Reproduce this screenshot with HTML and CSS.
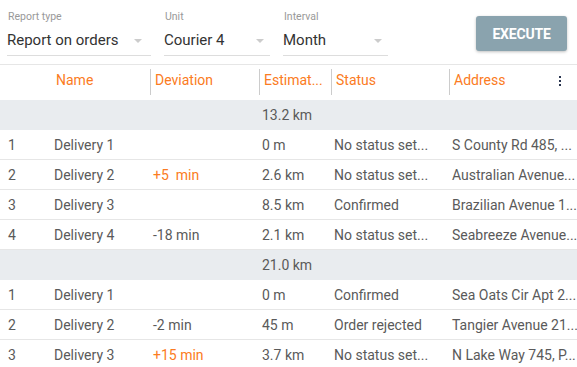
FILE: index.html
```html
<!DOCTYPE html>
<html>
<head>
<meta charset="utf-8">
<title>Report on orders</title>
<link rel="stylesheet" href="styles.css">
</head>
<body>
<div class="toolbar">
	<div class="field f-type">
		<label>Report type</label>
		<div class="select">Report on orders<span class="caret"></span></div>
	</div>
	<div class="field f-unit">
		<label>Unit</label>
		<div class="select">Courier 4<span class="caret"></span></div>
	</div>
	<div class="field f-interval">
		<label>Interval</label>
		<div class="select">Month<span class="caret"></span></div>
	</div>
	<button class="execute">EXECUTE</button>
</div>

<div class="grid">
	<div class="row head">
		<div class="cell"></div>
		<div class="cell">Name</div>
		<div class="cell sep">Deviation</div>
		<div class="cell sep" title="Estimated distance">Estimat...</div>
		<div class="cell sep">Status</div>
		<div class="cell sep">Address<span class="kebab"><i></i><i></i><i></i></span></div>
	</div>

	<div class="row group"><div class="cell span">13.2 km</div></div>
	<div class="row">
		<div class="cell">1</div><div class="cell">Delivery 1</div><div class="cell"></div>
		<div class="cell">0 m</div><div class="cell">No status set...</div><div class="cell">S County Rd 485, ...</div>
	</div>
	<div class="row">
		<div class="cell">2</div><div class="cell">Delivery 2</div><div class="cell late">+5&nbsp;&nbsp;min</div>
		<div class="cell">2.6 km</div><div class="cell">No status set...</div><div class="cell">Australian Avenue...</div>
	</div>
	<div class="row">
		<div class="cell">3</div><div class="cell">Delivery 3</div><div class="cell"></div>
		<div class="cell">8.5 km</div><div class="cell">Confirmed</div><div class="cell">Brazilian Avenue 1...</div>
	</div>
	<div class="row">
		<div class="cell">4</div><div class="cell">Delivery 4</div><div class="cell">-18 min</div>
		<div class="cell">2.1 km</div><div class="cell">No status set...</div><div class="cell">Seabreeze Avenue...</div>
	</div>

	<div class="row group"><div class="cell span">21.0 km</div></div>
	<div class="row">
		<div class="cell">1</div><div class="cell">Delivery 1</div><div class="cell"></div>
		<div class="cell">0 m</div><div class="cell">Confirmed</div><div class="cell">Sea Oats Cir Apt 2...</div>
	</div>
	<div class="row">
		<div class="cell">2</div><div class="cell">Delivery 2</div><div class="cell">-2 min</div>
		<div class="cell">45 m</div><div class="cell">Order rejected</div><div class="cell">Tangier Avenue 21...</div>
	</div>
	<div class="row">
		<div class="cell">3</div><div class="cell">Delivery 3</div><div class="cell late">+15 min</div>
		<div class="cell">3.7 km</div><div class="cell">No status set...</div><div class="cell">N Lake Way 745, P...</div>
	</div>
</div>
</body>
</html>
```

FILE: styles.css
```css
* {
	box-sizing: border-box;
}

body {
	margin: 0;
	font-family: Roboto, 'Liberation Sans', Arial, sans-serif;
	font-size: 14px;
	color: #5a5a5a;
	background: #fff;
	overflow: hidden;
}

/* toolbar with the three selects */

.toolbar {
	display: flex;
	align-items: flex-start;
	height: 65px;
	padding: 10px 10px 0 7px;
	border-bottom: 1px solid #e6e6e6;
}

.field {
	margin-right: 13px;
}

.field label {
	display: block;
	padding-left: 1px;
	font-size: 10.5px;
	line-height: 14px;
	color: #999;
}

.select {
	position: relative;
	height: 32px;
	padding-top: 7px;
	font-size: 15px;
	line-height: 18px;
	color: #333;
	border-bottom: 1px solid #ddd;
}

.caret {
	position: absolute;
	top: 15px;
	right: 9px;
	border: 4px solid transparent;
	border-top: 4px solid #ccc;
	border-bottom: 0;
	width: 0;
	height: 0;
}

.f-type { width: 144px; }
.f-unit { width: 106px; }
.f-interval { width: 105px; }
.f-unit .caret, .f-interval .caret { right: 6px; }

.execute {
	margin: 6px 0 0 auto;
	width: 91px;
	height: 35px;
	border: 0;
	border-radius: 3px;
	background: #8aa3ae;
	color: #fff;
	font-family: Roboto, 'Liberation Sans', Arial, sans-serif;
	font-size: 14px;
	font-weight: bold;
	letter-spacing: -0.2px;
	box-shadow: 0 1px 3px rgba(0,0,0,.25);
}

/* table */

.row {
	display: grid;
	grid-template-columns: 46px 99px 109px 72px 118px 133px;
	height: 30px;
	border-bottom: 1px solid #e6e6e6;
}

.cell {
	padding: 1px 0 0 8px;
	line-height: 29px;
	white-space: nowrap;
	overflow: hidden;
}

.late {
	color: #fb7b22;
}

.head {
	height: 35px;
	border-bottom: 0;
}

.head .cell {
	position: relative;
	padding: 0 0 0 10px;
	line-height: 31px;
	color: #fb7b22;
}

.head .sep:before {
	content: '';
	position: absolute;
	left: 5px;
	top: 4px;
	height: 26px;
	border-left: 1px solid #ccc;
}

.kebab {
	position: absolute;
	right: 16px;
	top: 11px;
	display: flex;
	flex-direction: column;
	gap: 2px;
}

.kebab i {
	display: block;
	width: 2px;
	height: 2px;
	background: #2a3550;
}

.group {
	background: #e9ecef;
	border-bottom: 0;
}

.group .span {
	grid-column: 4 / 7;
	padding-top: 0;
	line-height: 30px;
}
```
